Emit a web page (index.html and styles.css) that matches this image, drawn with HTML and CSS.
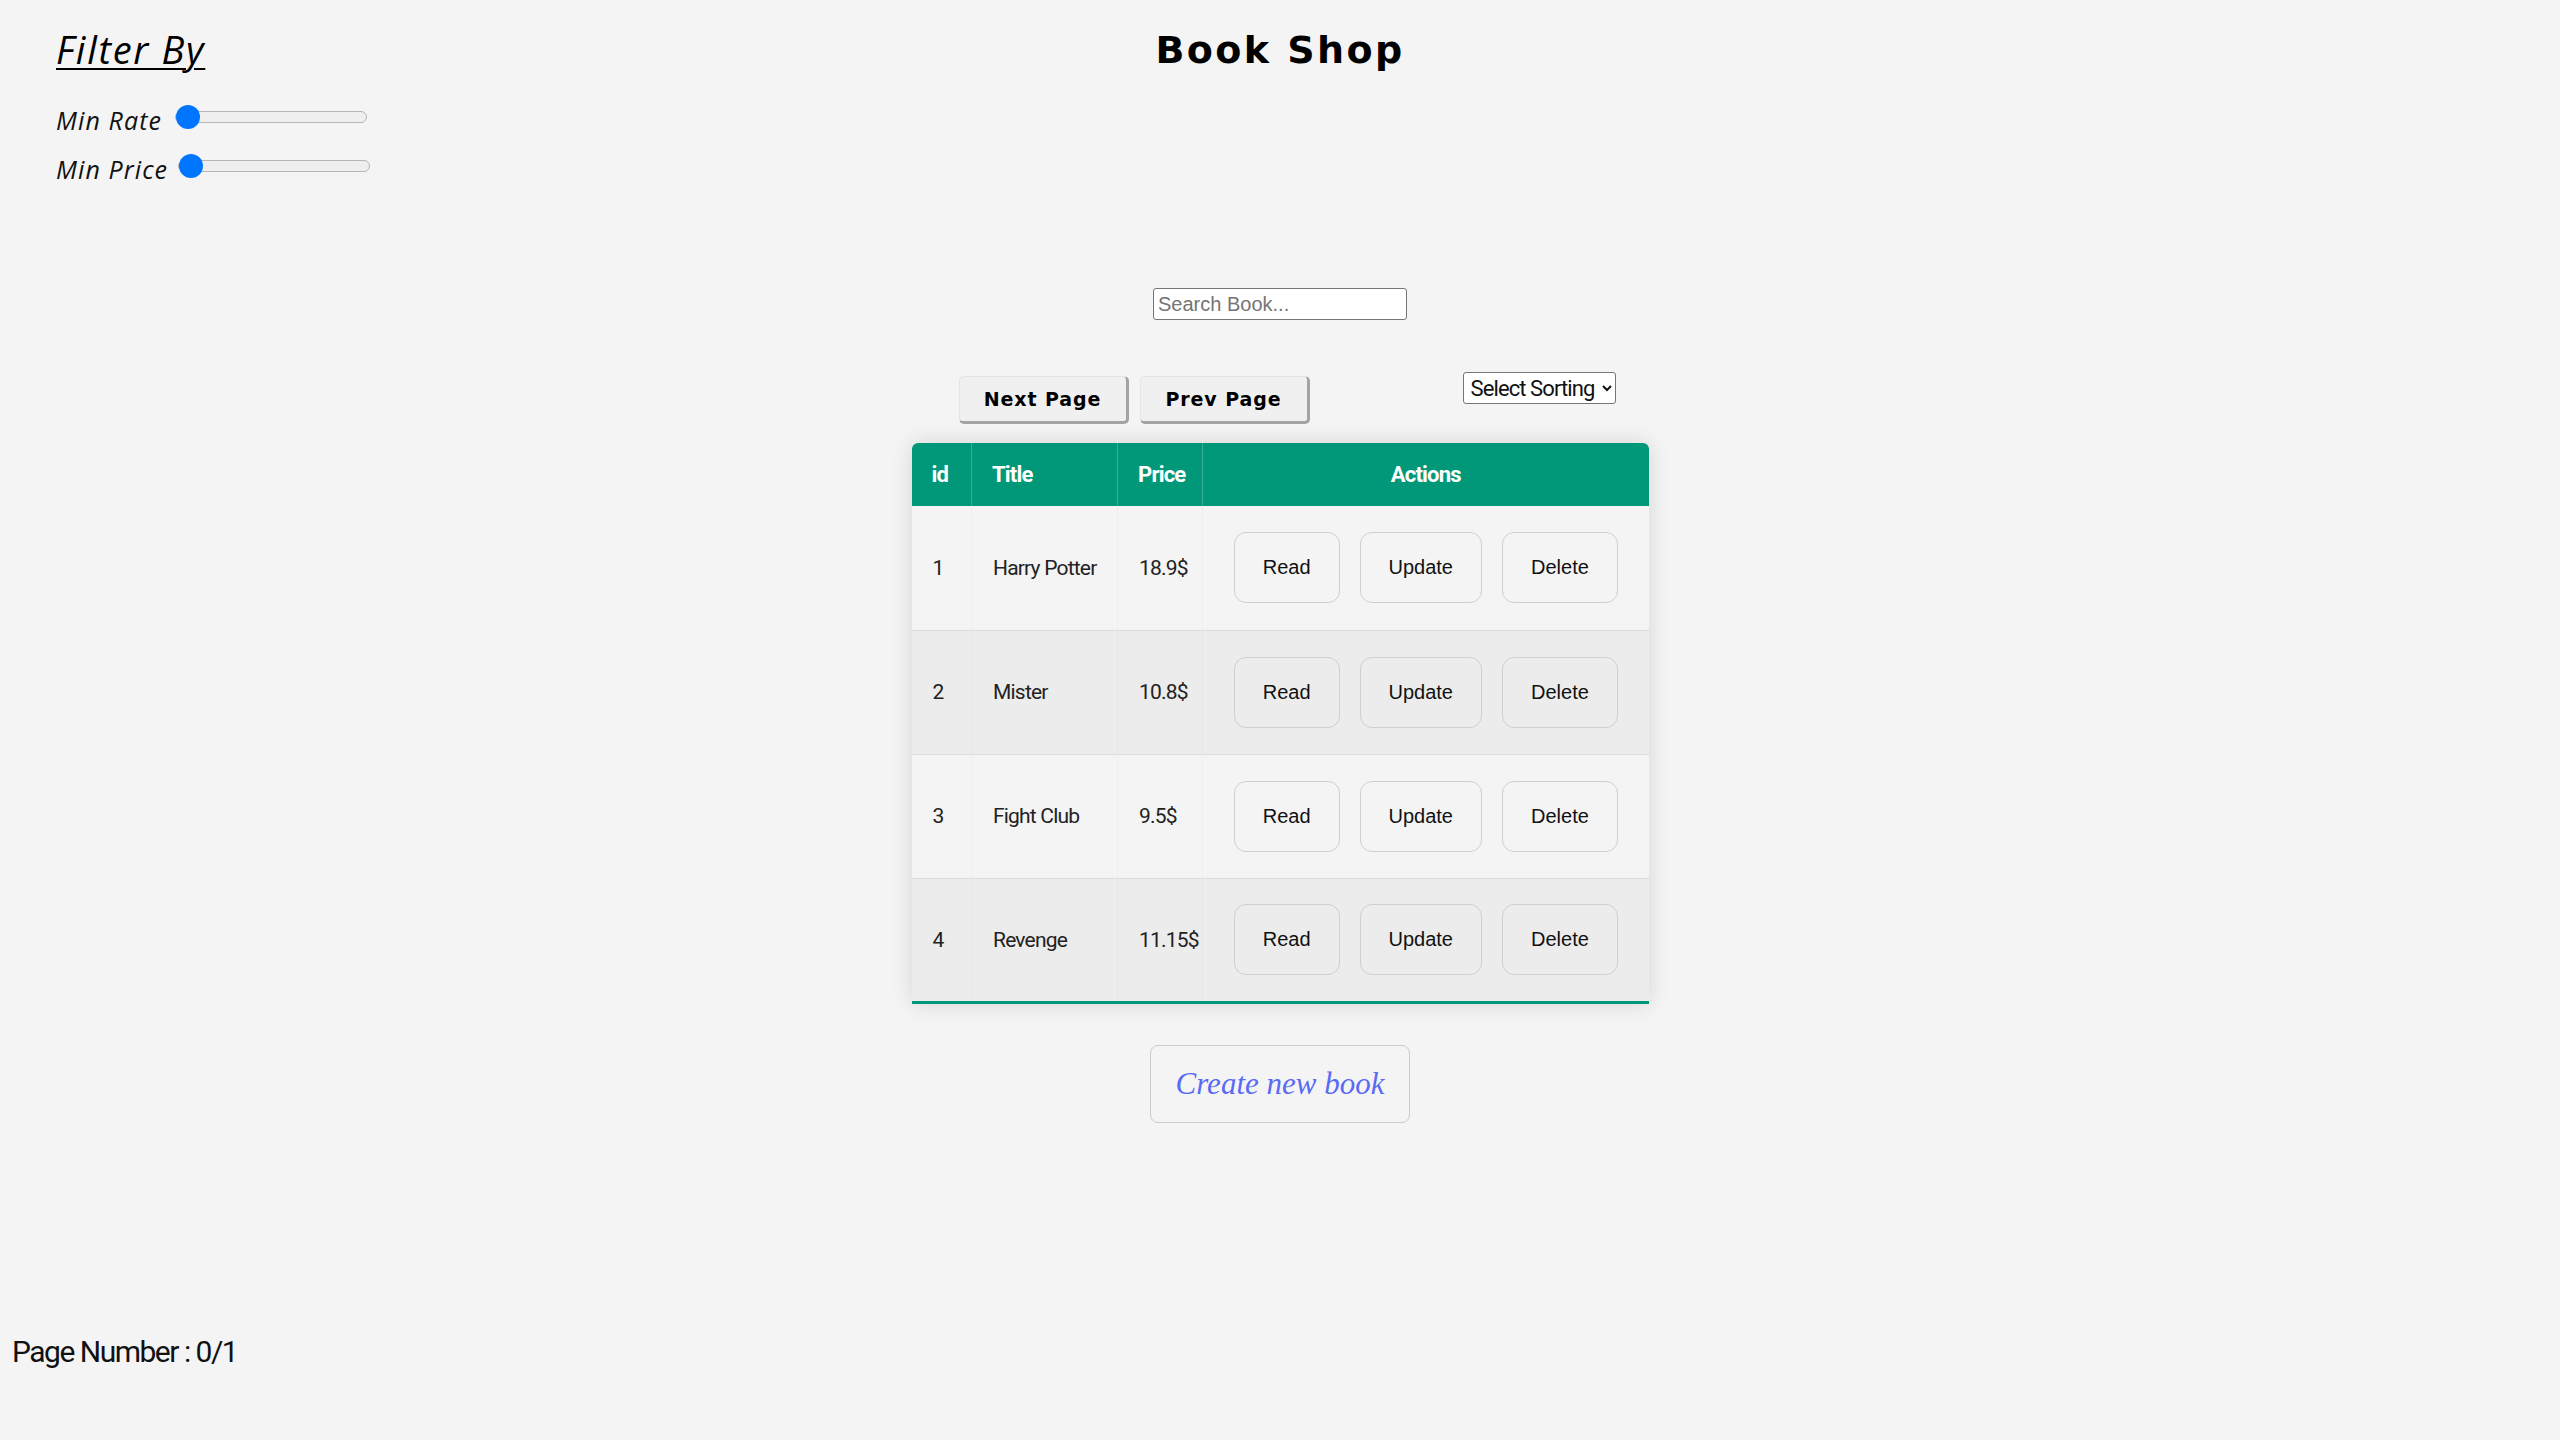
FILE: index.html
```html
<!DOCTYPE html>
<html lang="en">
<head>
<meta charset="utf-8">
<title>Book Shop</title>
<link rel="stylesheet" href="styles.css">
</head>
<body>
<div class="page">
  <header class="top">
    <aside class="filter">
      <h2 class="filter-title">Filter By</h2>
      <label class="filter-row"><span class="filter-label">Min Rate</span><input class="slider slider-rate" type="range" min="0" max="5" value="0"></label>
      <label class="filter-row"><span class="filter-label">Min Price</span><input class="slider" type="range" min="0" max="100" value="0"></label>
    </aside>
    <h1 class="brand">Book Shop</h1>
    <div class="top-spacer"></div>
  </header>

  <main class="main">
    <input class="search" type="text" placeholder="Search Book...">

    <div class="controls">
      <div class="pager">
        <button class="pager-btn">Next Page</button>
        <button class="pager-btn">Prev Page</button>
      </div>
      <select class="sort">
        <option>Select Sorting</option>
        <option>Price</option>
        <option>Title</option>
      </select>
    </div>

    <table class="books">
      <colgroup>
        <col class="col-id">
        <col class="col-title">
        <col class="col-price">
        <col class="col-actions">
      </colgroup>
      <thead>
        <tr>
          <th>id</th>
          <th>Title</th>
          <th>Price</th>
          <th class="th-actions">Actions</th>
        </tr>
      </thead>
      <tbody>
        <tr>
          <td>1</td><td>Harry Potter</td><td>18.9$</td>
          <td class="actions"><div class="action-group"><button class="act">Read</button><button class="act">Update</button><button class="act">Delete</button></div></td>
        </tr>
        <tr>
          <td>2</td><td>Mister</td><td>10.8$</td>
          <td class="actions"><div class="action-group"><button class="act">Read</button><button class="act">Update</button><button class="act">Delete</button></div></td>
        </tr>
        <tr>
          <td>3</td><td>Fight Club</td><td>9.5$</td>
          <td class="actions"><div class="action-group"><button class="act">Read</button><button class="act">Update</button><button class="act">Delete</button></div></td>
        </tr>
        <tr>
          <td>4</td><td>Revenge</td><td>11.15$</td>
          <td class="actions"><div class="action-group"><button class="act">Read</button><button class="act">Update</button><button class="act">Delete</button></div></td>
        </tr>
      </tbody>
    </table>

    <button class="create">Create new book</button>
  </main>

  <footer class="page-number">Page Number : 0/1</footer>
</div>
</body>
</html>
```

FILE: styles.css
```css
* { box-sizing: border-box; }

html, body {
  margin: 0;
  padding: 0;
  background: #f4f4f4;
}

body {
  font-family: Roboto, "Liberation Sans", sans-serif;
  color: #000;
}

.page {
  width: 2560px;
  min-height: 1440px;
}

/* ---------- top ---------- */
.top {
  display: grid;
  grid-template-columns: 1fr auto 1fr;
  align-items: start;
}

.filter {
  display: flex;
  flex-direction: column;
  gap: 19px;
  padding: 27px 0 0 56px;
}

.filter-title {
  margin: 0 0 15px 0;
  font-family: "Open Sans", sans-serif;
  font-style: italic;
  font-weight: 400;
  font-size: 38px;
  line-height: 44px;
  letter-spacing: 1.7px;
  text-decoration: underline;
  text-decoration-thickness: 2px;
  text-underline-offset: 4px;
}

.filter-row {
  display: flex;
  align-items: center;
  height: 30px;
}

.filter-label {
  font-family: "Open Sans", sans-serif;
  font-style: italic;
  font-size: 25px;
  line-height: 30px;
  letter-spacing: 1.1px;
  color: #111;
}

.slider {
  -webkit-appearance: none;
  appearance: none;
  width: 192px;
  height: 12px;
  margin: 0 0 6px 10px;
  padding: 0;
  background: #efefef;
  border: 1px solid #b5b5b5;
  border-radius: 6px;
  outline: none;
}

.slider-rate { margin-left: 13px; }

.slider::-webkit-slider-thumb {
  -webkit-appearance: none;
  appearance: none;
  width: 24px;
  height: 24px;
  border-radius: 50%;
  background: #0075ff;
  border: none;
}

.brand {
  margin: 0;
  padding-top: 28px;
  font-family: "DejaVu Sans", sans-serif;
  font-weight: 700;
  font-size: 38px;
  line-height: 44px;
  letter-spacing: 2.4px;
  text-align: center;
}

/* ---------- main ---------- */
.main {
  display: flex;
  flex-direction: column;
  align-items: center;
  margin-top: 104px;
}

.search {
  width: 254px;
  height: 32px;
  margin: 0 0 52px 0;
  padding: 0 4px;
  font-family: "Liberation Sans", Arial, sans-serif;
  font-size: 20px;
  background: #fff;
  border: 1px solid #767676;
  border-radius: 3px;
}

.search::placeholder { color: #757575; }

.controls {
  width: 737px;
  height: 52px;
  display: flex;
  align-items: flex-start;
  justify-content: space-between;
  padding: 0 33px 0 47px;
}

.pager {
  display: flex;
  gap: 11px;
  margin-top: 4px;
}

.pager-btn {
  width: 170px;
  height: 48px;
  padding: 0;
  font-family: "DejaVu Sans", sans-serif;
  font-weight: 700;
  font-size: 19px;
  letter-spacing: 0.9px;
  color: #000;
  background: #f0f0f0;
  border: 1px solid #e4e4e4;
  border-right: 3px solid #a3a3a3;
  border-bottom: 3px solid #a3a3a3;
  border-radius: 5px;
}

.sort {
  width: 153px;
  height: 32px;
  padding: 0 0 0 3px;
  font-family: Roboto, sans-serif;
  font-size: 22px;
  letter-spacing: -0.9px;
  color: #111;
  background: #fff;
  border: 1px solid #767676;
  border-radius: 3px;
}

/* ---------- table ---------- */
.books {
  width: 737px;
  margin-top: 19px;
  table-layout: fixed;
  border-collapse: collapse;
  border-radius: 6px 6px 0 0;
  overflow: hidden;
  box-shadow: 0 0 22px rgba(0, 0, 0, 0.13);
  font-family: Roboto, sans-serif;
  font-size: 21px;
  letter-spacing: -0.8px;
  color: #222;
}

.col-id { width: 60px; }
.col-title { width: 146px; }
.col-price { width: 85px; }
.col-actions { width: 446px; }

.books thead tr {
  background: #009879;
  color: #fff;
  height: 63px;
}

.books th {
  font-weight: 700;
  font-size: 22px;
  text-align: left;
  padding: 0 20px;
  white-space: nowrap;
  border-right: 1px solid rgba(255, 255, 255, 0.22);
}

.books th:last-child { border-right: none; }

.books th.th-actions { text-align: center; }

.books tbody tr {
  background: #f4f4f4;
  border-bottom: 1px solid #dddddd;
}

.books tbody tr:nth-child(even) { background: #ececec; }

.books tbody tr:last-child { border-bottom: 3px solid #009879; }

.books td {
  height: 124px;
  padding: 0 0 0 21px;
  white-space: nowrap;
  border-right: 1px solid rgba(0, 0, 0, 0.025);
}

.books td:last-child { border-right: none; }

.books td.actions { padding: 0; }

.action-group {
  display: flex;
  justify-content: center;
  gap: 20px;
}

.act {
  padding: 23px 28px;
  font-family: "Liberation Sans", Arial, sans-serif;
  font-size: 20px;
  line-height: 23px;
  letter-spacing: 0;
  color: #111;
  background: transparent;
  border: 1px solid #cfcfcf;
  border-radius: 12px;
}

/* ---------- create ---------- */
.create {
  width: 260px;
  height: 78px;
  margin-top: 41px;
  padding: 0;
  font-family: "Liberation Serif", serif;
  font-style: italic;
  font-size: 31px;
  color: #5a6af5;
  background: transparent;
  border: 1px solid #cccccc;
  border-radius: 8px;
}

/* ---------- footer ---------- */
.page-number {
  margin-top: 212px;
  padding-left: 12px;
  font-family: Roboto, sans-serif;
  font-size: 30px;
  line-height: 34px;
  letter-spacing: -1.5px;
  color: #111;
}
```
